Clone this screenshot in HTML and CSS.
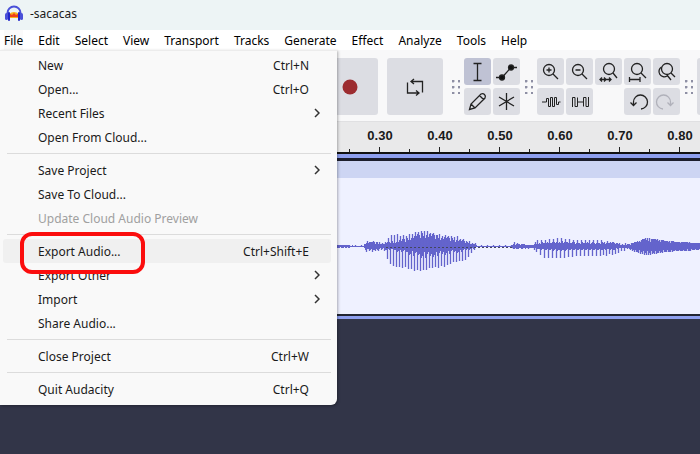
FILE: index.html
```html
<!DOCTYPE html>
<html lang="en">
<head>
    <meta charset="UTF-8">
    <meta name="viewport" content="width=device-width, initial-scale=1.0">
    <title>-sacacas</title>
    <link rel="stylesheet" href="styles.css">
</head>
<body>
    <header class="titlebar">
        <svg class="logo" width="18" height="18" viewBox="0 0 18 18">
            <path d="M4 9 Q9 5 14 9 V13 H4z" fill="#f9b21c"/>
            <path d="M4 10 l1.500 -1 1.500 1 2 -2 2 2 1.500 -1 1.500 1 v2 H4z" fill="#f0401c"/>
            <path d="M2.500 10 V8 A6.500 6.500 0 0 1 15.500 8 V10" fill="none" stroke="#4a50d8" stroke-width="2"/>
            <rect x="0" y="8" width="3" height="7" rx="1.500" fill="#4a50d8"/>
            <rect x="3" y="7" width="2" height="9" rx="1" fill="#2226c8"/>
            <rect x="15" y="8" width="3" height="7" rx="1.500" fill="#4a50d8"/>
            <rect x="13" y="7" width="2" height="9" rx="1" fill="#2226c8"/>
        </svg>
        <span>-sacacas</span>
    </header>

    <nav class="menubar">
        <button class="open">File</button>
        <button>Edit</button>
        <button>Select</button>
        <button>View</button>
        <button>Transport</button>
        <button>Tracks</button>
        <button>Generate</button>
        <button>Effect</button>
        <button>Analyze</button>
        <button>Tools</button>
        <button>Help</button>

        <div class="menu">
            <button class="item">New <kbd>Ctrl+N</kbd></button>
            <button class="item">Open... <kbd>Ctrl+O</kbd></button>
            <button class="item">Recent Files <svg class="arrow" viewBox="0 0 6 10"><path d="M1 1l4 4-4 4"/></svg></button>
            <button class="item">Open From Cloud...</button>
            <hr>
            <button class="item">Save Project <svg class="arrow" viewBox="0 0 6 10"><path d="M1 1l4 4-4 4"/></svg></button>
            <button class="item">Save To Cloud...</button>
            <button class="item" disabled>Update Cloud Audio Preview</button>
            <hr>
            <button class="item active">Export Audio... <kbd>Ctrl+Shift+E</kbd></button>
            <button class="item">Export Other <svg class="arrow" viewBox="0 0 6 10"><path d="M1 1l4 4-4 4"/></svg></button>
            <button class="item">Import <svg class="arrow" viewBox="0 0 6 10"><path d="M1 1l4 4-4 4"/></svg></button>
            <button class="item">Share Audio...</button>
            <hr>
            <button class="item">Close Project <kbd>Ctrl+W</kbd></button>
            <hr>
            <button class="item">Quit Audacity <kbd>Ctrl+Q</kbd></button>
        </div>
    </nav>

    <div class="toolbar">
        <button class="big record" aria-label="Record"><svg width="16" height="16" viewBox="0 0 16 16"><circle cx="8" cy="8" r="7.500"/></svg></button>
        <button class="big" aria-label="Loop">
            <svg width="18" height="18" viewBox="0 0 18 18"><path d="M1.500 4.500v10.500h11M5 3.500h11.500v11M8 1L5 3.500 8 6M10 12.500l3 2.500-3 2.500"/></svg>
        </button>
        <span class="grip"></span>
        <div class="tools edit">
            <button class="selected" aria-label="Selection"><svg viewBox="0 0 27 27"><path d="M9.500 5.500h8M9.500 22.500h8M13.500 5.500v17"/></svg></button>
            <button aria-label="Envelope"><svg viewBox="0 0 27 27"><path d="M3 19.500h6L18 9.500h6"/><circle cx="9" cy="19.500" r="2.500" fill="#111"/><circle cx="18" cy="9.500" r="2.500" fill="#111"/></svg></button>
            <button aria-label="Draw"><svg viewBox="0 0 27 27"><path d="M5.500 21.500l1.500-5.500L17 6q2-1 3.500.500t.500 3.500L11 20zM7 16l4 4M15.500 7.500l4 4"/></svg></button>
            <button aria-label="Multi-tool"><svg viewBox="0 0 27 27"><path d="M13.500 5v17M6 9l15 9M21 9L6 18"/></svg></button>
        </div>
        <span class="grip"></span>
        <div class="tools zoom">
            <button aria-label="Zoom In"><svg viewBox="0 0 27 27"><circle cx="12" cy="12" r="5.500"/><path d="M16 16l5 5M9.500 12h5M12 9.500v5"/></svg></button>
            <button aria-label="Zoom Out"><svg viewBox="0 0 27 27"><circle cx="12" cy="12" r="5.500"/><path d="M16 16l5 5M9.500 12h5"/></svg></button>
            <button aria-label="Zoom to Selection"><svg viewBox="0 0 27 27"><circle cx="14" cy="11" r="5.500"/><path d="M18 15l4 5M5 21.500h11M7 19.500l-2 2 2 2M14 19.500l2 2-2 2M9 19.500l2 2-2 2"/></svg></button>
            <button aria-label="Fit to Width"><svg viewBox="0 0 27 27"><circle cx="13" cy="11" r="5.500"/><path d="M17 15l5 5M5 21.500h11M5.500 19v5M16 19v5"/></svg></button>
            <button aria-label="Zoom Toggle"><svg viewBox="0 0 27 27"><circle cx="14" cy="11" r="5.500"/><path d="M18 15l4 4M8.500 9a5 5 0 1 0 5.500 9M14 17l4 5"/></svg></button>
            <button aria-label="Trim"><svg class="thin" viewBox="0 0 27 27"><path d="M5 14h4.500V10.500h2v8h2v-9h2v9h2v-9h2v7h2V14h2"/></svg></button>
            <button aria-label="Silence"><svg class="thin" viewBox="0 0 27 27"><path d="M6.500 19V9.500h2.500v9h2.500V9.500M11.500 14h6M17.500 18.500v-9H20v9h2.500V9"/></svg></button>
            <button class="undo" aria-label="Undo"><svg viewBox="0 0 27 27"><path d="M17 21a7 7 0 1 0-7.500-7v3M6.500 14.500l3 3 3-3"/></svg></button>
            <button class="redo" aria-label="Redo"><svg viewBox="0 0 27 27"><path d="M10 21a7 7 0 1 1 7.500-7v3M14.500 14.500l3 3 3-3"/></svg></button>
        </div>
        <span class="grip"></span>
        <div class="meter"></div>
    </div>

    <div class="ruler">
        <span>0.30</span><span>0.40</span><span>0.50</span><span>0.60</span><span>0.70</span><span>0.80</span>
    </div>

    <main class="track">
        <div class="clip-title"></div>
        <svg class="wave" id="wave"></svg>
    </main>

    <script src="wave.js"></script>
</body>
</html>
```
FILE: styles.css
```css
* {
    box-sizing: border-box;
}
body {
    margin: 0;
    min-height: 100vh;
    background: #323548;
    font-family: "Noto Sans", sans-serif;
    font-size: 12px;
    color: #1a1a1a;
    overflow: hidden;
}
button {
    font: inherit;
    color: inherit;
    border: none;
    padding: 0;
    background: none;
}
svg {
    display: block;
    flex: none;
}
.titlebar {
    display: flex;
    align-items: center;
    gap: 7px;
    height: 30px;
    padding: 0 5px 3px;
    background: #edf4f5;
}
.menubar {
    position: relative;
    display: flex;
    gap: 15px;
    height: 20px;
    padding-left: 4px;
    background: #fff;
    color: #000;
}
.menubar .open {
    background: #fafafa;
}

/* File menu */
.menu {
    position: absolute;
    top: 20px;
    left: 0;
    width: 337px;
    padding: 2px 6px 4px 3px;
    background: #f9f9f9;
    border-top: 1px solid #ececec;
    border-radius: 0 0 6px 0;
    box-shadow: 1px 1px 3px rgba(0, 0, 0, 0.3);
    color: #1a1a1a;
    z-index: 1;
}
.item {
    position: relative;
    display: flex;
    justify-content: space-between;
    align-items: center;
    width: 100%;
    height: 24px;
    padding: 0 22px 0 35px;
    border-radius: 3px;
}
.item:disabled {
    color: #a0a0a0;
}
.item kbd {
    font: inherit;
}
.active {
    background: #f0f0f0;
    z-index: 1;
}
.active::after {
    content: "";
    position: absolute;
    box-sizing: border-box;
    top: -7px;
    left: 17px;
    width: 125px;
    height: 42px;
    border: 4px solid #fb0d0d;
    border-radius: 12px;
}
.arrow {
    width: 6px;
    height: 10px;
    margin-right: -11px;
    fill: none;
    stroke: #333;
    stroke-width: 1.5;
}
.menu hr {
    height: 1px;
    margin: 4px 0 4px 4px;
    border: none;
    background: #dcdcdc;
}

/* Toolbar */
.toolbar {
    display: flex;
    padding: 8px 0 6px 322px;
    background: #f8f8f9;
}
.toolbar button {
    display: flex;
    justify-content: center;
    align-items: center;
    flex: none;
    border-radius: 3px;
    background: #dcdde3;
}
.toolbar svg {
    fill: none;
    stroke: #222;
    stroke-width: 1.3;
}
.toolbar .thin {
    stroke-width: 1;
}
.toolbar .record svg {
    fill: #9c2c30;
    stroke: none;
}
.toolbar .big {
    width: 56px;
    height: 57px;
    margin-right: 9px;
}
.big + .grip {
    margin-left: 0;
}
.grip {
    flex: none;
    align-self: center;
    width: 8px;
    height: 14px;
    margin: 0 4px 0 5px;
    background: radial-gradient(circle at 1px 1px, #8e8fa4 1px, transparent 2px) 0 0 / 6px 6px;
}
.tools {
    display: grid;
    flex: none;
    gap: 3px 2px;
}
.tools button {
    width: 27px;
    height: 27px;
}
.tools svg {
    width: 27px;
    height: 27px;
}
.edit {
    grid-template-columns: repeat(2, 27px);
}
.zoom {
    grid-template-columns: repeat(5, 27px);
}
.tools .selected {
    background: #bfc2d4;
}
.undo {
    grid-column: 4;
}
.redo svg {
    stroke: #b0b1ba;
}
.meter {
    flex: 1;
    background: #dcdde3;
    border-radius: 3px 0 0 3px;
}

/* Timeline */
.ruler {
    display: flex;
    height: 31px;
    padding-left: 349px;
    background: #e9e9ea;
    border-top: 1px solid #e0e0e2;
    overflow: hidden;
}
.ruler span {
    flex: none;
    width: 60px;
    padding-left: 2px;
    font: bold 13px/28px "Liberation Sans", sans-serif;
    text-align: center;
    background:
        linear-gradient(#222, #222) 0 100% / 1px 3px no-repeat,
        linear-gradient(#222, #222) 30px 100% / 1px 5px no-repeat;
}
.ruler span:last-child {
    margin-right: -60px;
}
.track {
    background: #eff1ff;
    border-top: 2px solid #111;
    border-bottom: 3px solid #8e9fee;
}
.clip-title {
    height: 24px;
    border-top: 4px solid #8e9fee;
    background: linear-gradient(#1c1e2c 3px, #cdd5f3 3px);
}
.wave {
    width: 100%;
    height: 138px;
    border-bottom: 2px solid #222533;
    fill: none;
    stroke: #6464cc;
}
```
FILE: wave.js
```js
// x, peak above, peak below, solid core, spike spacing
var points = [
    [337, 1, 1, 1, 3],
    [363, 1, 0, 0, 3],
    [364, 5, 4, 2, 3],
    [368, 5, 5, 4, 3],
    [384, 4, 4, 2, 3],
    [386, 9, 12, 3, 3],
    [393, 12, 20, 4, 3],
    [405, 11, 21, 6, 3],
    [413, 14, 24, 9, 3],
    [423, 16, 24, 11, 3],
    [432, 13, 21, 10, 3],
    [444, 11, 20, 8, 3],
    [455, 10, 15, 6, 3],
    [465, 6, 14, 4, 3],
    [473, 3, 4, 2, 3],
    [478, 1, 0, 0, 3],
    [511, 1, 0, 0, 3],
    [513, 5, 3, 2, 3],
    [518, 2, 2, 2, 3],
    [532, 1, 2, 1, 3],
    [535, 6, 4, 2, 4],
    [543, 6, 11, 3, 4],
    [560, 8, 11, 4, 4],
    [576, 6, 9, 3, 4],
    [598, 6, 9, 3, 3],
    [614, 4, 8, 3, 3],
    [622, 3, 4, 1, 3],
    [630, 3, 3, 2, 2],
    [638, 5, 6, 5, 2],
    [645, 8, 8, 6, 2],
    [655, 7, 7, 6, 2],
    [665, 5, 5, 5, 2],
    [680, 4, 4, 4, 2],
    [700, 3, 3, 3, 2]
];
var center = 68;
var path = "";
var spikes = "";

for (var i = 0; i < points.length - 1; i++) {
    var a = points[i], b = points[i + 1];
    for (var x = a[0]; x < b[0]; x++) {
        var t = (x - a[0]) / (b[0] - a[0]);
        var peak = a[1] + (b[1] - a[1]) * t;
        var low = a[2] + (b[2] - a[2]) * t;
        var core = a[3] + (b[3] - a[3]) * t;
        var up = Math.min(core + (x * 7 % 5 - 2) * core / 8, peak);
        var down = Math.min(core / 2 + x * 3 % 4 * core / 6, low);
        path += "M" + (x + 0.5) + " " + Math.round(center - up) + "V" + Math.round(center + 1 + down);
        if (x % a[4] === 0) {
            spikes += "M" + (x + 0.5) + " " + center + "V" + Math.round(center + 1 + low - x % 2);
            spikes += "M" + (x + 1.5) + " " + center + "V" + Math.round(center - peak + x % 2);
        }
    }
}

document.getElementById("wave").innerHTML =
    '<path d="' + path + '"/><path d="' + spikes + '" stroke-width="1.3"/>' +
    '<path d="M386 69.500H512" stroke="#44465e" stroke-dasharray="2 2"/>';
```
